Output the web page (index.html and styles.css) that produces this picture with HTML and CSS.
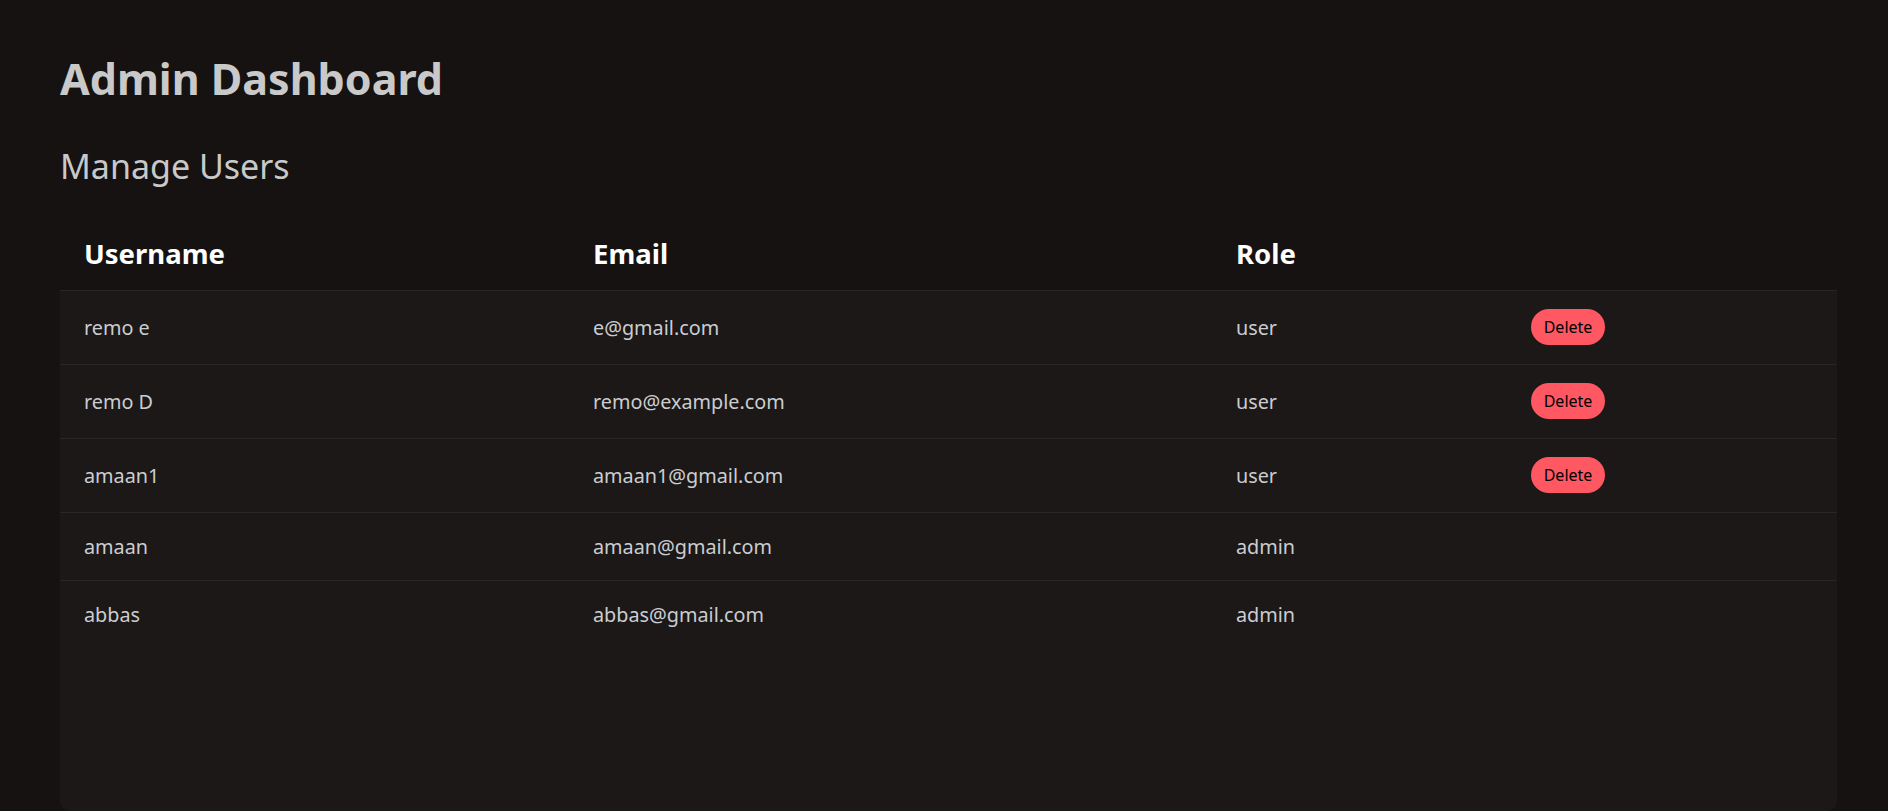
FILE: index.html
```html
<!DOCTYPE html>
<html lang="en">
<head>
<meta charset="utf-8">
<title>Admin Dashboard</title>
<link rel="stylesheet" href="styles.css">
</head>
<body>
<main class="page">
  <h1 class="title">Admin Dashboard</h1>
  <h2 class="subtitle">Manage Users</h2>
  <div class="card">
    <table class="users">
      <colgroup>
        <col class="c-user">
        <col class="c-email">
        <col class="c-role">
        <col class="c-action">
      </colgroup>
      <thead>
        <tr>
          <th>Username</th>
          <th>Email</th>
          <th>Role</th>
          <th></th>
        </tr>
      </thead>
      <tbody>
        <tr class="row-btn">
          <td>remo e</td>
          <td>e@gmail.com</td>
          <td>user</td>
          <td><button class="btn-delete">Delete</button></td>
        </tr>
        <tr class="row-btn">
          <td>remo D</td>
          <td>remo@example.com</td>
          <td>user</td>
          <td><button class="btn-delete">Delete</button></td>
        </tr>
        <tr class="row-btn">
          <td>amaan1</td>
          <td>amaan1@gmail.com</td>
          <td>user</td>
          <td><button class="btn-delete">Delete</button></td>
        </tr>
        <tr class="row-plain">
          <td>amaan</td>
          <td>amaan@gmail.com</td>
          <td>admin</td>
          <td></td>
        </tr>
        <tr class="row-plain row-last">
          <td>abbas</td>
          <td>abbas@gmail.com</td>
          <td>admin</td>
          <td></td>
        </tr>
      </tbody>
    </table>
  </div>
</main>
</body>
</html>
```

FILE: styles.css
```css
html, body {
  margin: 0;
  padding: 0;
  background: #151211;
  height: 100%;
  overflow: hidden;
}

body {
  font-family: "Segoe UI", "Noto Sans", "Open Sans", sans-serif;
  color: #cbcdd0;
}

.page {
  padding: 51px 51px 0 60px;
  display: flex;
  flex-direction: column;
}

.title {
  margin: 0;
  font-size: 43px;
  line-height: 56px;
  font-weight: 700;
  color: #c9c9c9;
}

.subtitle {
  margin: 37px 0 0;
  font-size: 34px;
  line-height: 44px;
  font-weight: 400;
  color: #c9c9c9;
}

.card {
  margin-top: 29px;
  background: #1b1817;
  border-radius: 10px;
  height: 594px;
  overflow: hidden;
}

.users {
  width: 100%;
  border-collapse: collapse;
  table-layout: fixed;
}

.c-user { width: 509px; }
.c-email { width: 643px; }
.c-role { width: 295px; }
.c-action { width: 330px; }

.users thead tr {
  background: #151211;
  height: 73px;
}

.users th {
  text-align: left;
  padding: 0 24px;
  font-size: 27.5px;
  font-weight: 700;
  color: #ffffff;
  border-bottom: 1px solid #292524;
  vertical-align: middle;
}

.users td {
  padding: 0 24px;
  font-size: 19.8px;
  color: #cbcdd0;
  border-bottom: 1px solid #292524;
  vertical-align: middle;
}

.row-btn { height: 74px; }
.row-plain { height: 68px; }
.row-last td { border-bottom: none; }

.btn-delete {
  display: inline-flex;
  align-items: center;
  justify-content: center;
  height: 36px;
  width: 74px;
  padding: 0;
  border: none;
  border-radius: 18px;
  background: #ff5863;
  color: #000000;
  font-family: "Segoe UI", "Noto Sans", "Open Sans", sans-serif;
  font-size: 16px;
  cursor: pointer;
}
```
